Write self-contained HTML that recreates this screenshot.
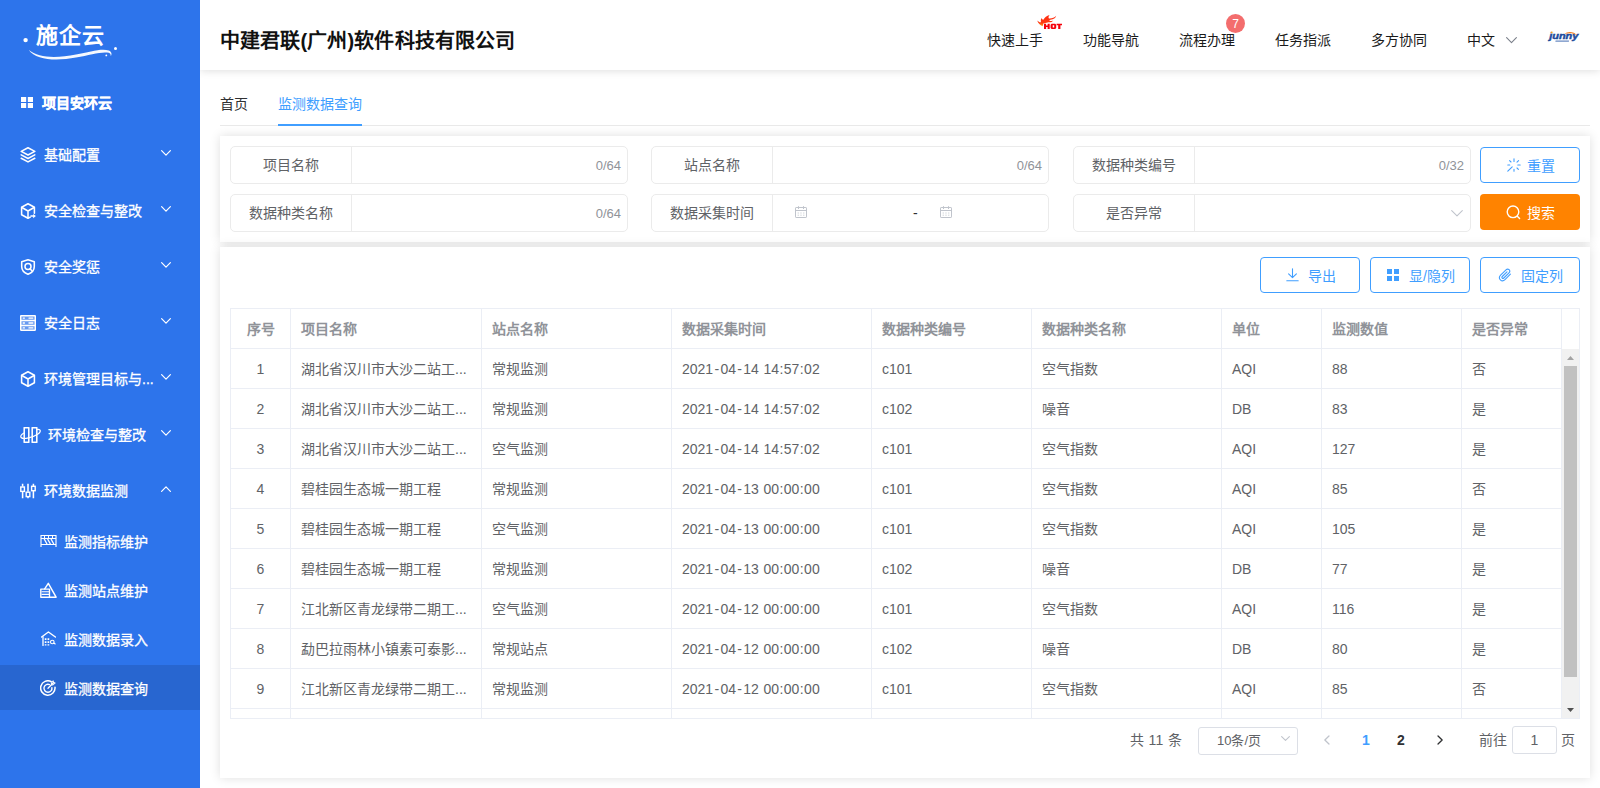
<!DOCTYPE html>
<html lang="zh-CN">
<head>
<meta charset="utf-8">
<title>监测数据查询</title>
<style>
*{box-sizing:border-box;margin:0;padding:0}
html,body{width:1600px;height:788px;overflow:hidden;background:#fff}
body{font-family:"Liberation Sans",sans-serif;font-size:14px;color:#606266;position:relative}
.abs{position:absolute}
svg{display:block}

/* ---------- sidebar ---------- */
#side{position:absolute;left:0;top:0;width:200px;height:788px;background:#2d74eb;color:#fff;z-index:5}
#side .it{position:absolute;left:0;width:200px;height:20px;line-height:20px;font-size:14px;color:#fff;white-space:nowrap}
#side .it .ic{position:absolute;left:20px;top:2px;width:16px;height:16px}
#side .it .tx{position:absolute;left:44px;top:0;-webkit-text-stroke:.3px #fff}
#side .it .ar{position:absolute;left:161px;top:5px;width:10px;height:6px}
#side .sub .ic{left:40px}
#side .sub .tx{left:64px}
#side .act{position:absolute;left:0;top:665px;width:200px;height:45px;background:#2866d0}

/* ---------- header ---------- */
#head{position:absolute;left:200px;top:0;width:1400px;height:70px;background:#fff;box-shadow:0 1px 8px rgba(0,0,0,.13);z-index:3}
#head .title{position:absolute;left:20px;top:26px;height:30px;line-height:30px;font-size:20px;font-weight:bold;color:#111;white-space:nowrap;letter-spacing:.12px}
#head .nav{position:absolute;top:30px;height:20px;line-height:20px;font-size:14px;color:#1a1a1a;white-space:nowrap}

/* ---------- tabs ---------- */
#tabs{position:absolute;left:220px;top:85px;width:1370px;height:41px}
#tabs .line{position:absolute;left:0;top:40px;width:1370px;height:1px;background:#e9e9e9}
#tabs .t{position:absolute;top:9px;height:20px;line-height:20px;font-size:14px;white-space:nowrap}
#tabs .bar{position:absolute;left:58px;top:39px;width:84px;height:2px;background:#409eff}

/* ---------- cards ---------- */
.card{position:absolute;left:220px;width:1370px;background:#fff;box-shadow:0 0 10px rgba(0,0,0,.13)}

/* ---------- filter ---------- */
.fld{position:absolute;width:398px;height:38px;border:1px solid #ebebeb;border-radius:5px;background:#fff}
.fld .lb{position:absolute;left:0;top:0;width:121px;height:36px;line-height:36px;text-align:center;font-size:14px;color:#606266;border-right:1px solid #ebebeb;white-space:nowrap}
.fld .ct{position:absolute;right:6px;top:0;height:36px;line-height:37px;font-size:13px;color:#909399}
.btn{position:absolute;width:100px;height:36px;border-radius:4px;font-size:14px;white-space:nowrap}
.btn.ol{border:1px solid #409eff;color:#409eff;background:#fff}
.btn .bt{position:absolute;top:1px;height:34px;line-height:34px}
/* ---------- table ---------- */
#tbl{position:absolute;left:10px;top:61px;width:1350px;height:411px;border:1px solid #ebeef5;border-right-width:1px;overflow:hidden;background:#fff}
#tbl .r{position:absolute;left:0;width:1331px;height:40px;border-bottom:1px solid #ebeef5}
#tbl .c{position:absolute;top:0;height:39px;line-height:40px;padding-left:10px;font-size:14px;color:#606266;border-right:1px solid #ebeef5;white-space:nowrap;overflow:hidden}
#tbl .h .c{color:#909399;font-weight:bold;line-height:41px}
#tbl i{font-style:normal}
#tbl .hy{margin:0 1.3px}
#tbl .co{margin:0 .45px}
#tbl .c3{word-spacing:.7px}
#tbl .c0{left:0;width:60px;padding-left:0;text-align:center}
#tbl .c1{left:60px;width:191px}
#tbl .c2{left:251px;width:190px}
#tbl .c3{left:441px;width:200px}
#tbl .c4{left:641px;width:160px}
#tbl .c5{left:801px;width:190px}
#tbl .c6{left:991px;width:100px}
#tbl .c7{left:1091px;width:140px}
#tbl .c8{left:1231px;width:100px}
#pg{position:absolute;left:0;top:479px;width:1370px;height:28px;font-size:13px;color:#606266}
#pg .p{position:absolute;top:0;height:28px;line-height:28px;white-space:nowrap}
</style>
</head>
<body>

<!-- ================= SIDEBAR ================= -->
<div id="side">
  <div class="act"></div>
  <svg class="abs" style="left:20px;top:18px" width="104" height="46" viewBox="0 0 104 46">
    <circle cx="5.6" cy="22.1" r="2.2" fill="#fff"/><circle cx="95.5" cy="30.5" r="1.5" fill="#fff"/><circle cx="86.3" cy="37.4" r="0.9" fill="#fff"/>
    <path d="M8.6 31.8 C19 40.8 38 40 56 36.6 C70 33.8 82 30 88.8 32.6 C92 34 92 36.6 90.8 38.2 C91 35.8 89.8 34.8 87 34.5 C80 33.8 69 37.2 56 39.6 C37 43.2 16 42.6 8.6 31.8Z" fill="#fff" opacity=".95"/>
  </svg>
  <div class="abs" style="left:36px;top:21px;height:30px;line-height:30px;font-size:22px;font-weight:bold;color:#fff;letter-spacing:1.2px;white-space:nowrap">施企云</div>
  <div class="it" style="top:93px"><svg class="ic" style="left:21px;top:4px;width:12px;height:11px" viewBox="0 0 12 11"><rect x="0" y="0" width="5.2" height="5" fill="#fff"/><rect x="6.8" y="0" width="5.2" height="5" fill="#fff"/><rect x="0" y="6" width="5.2" height="5" fill="#fff"/><rect x="6.8" y="6" width="5.2" height="5" fill="#fff"/></svg><span class="tx" style="font-weight:bold;left:42px;">项目安环云</span></div>
  <div class="it" style="top:145px"><svg class="ic" viewBox="0 0 16 16" fill="none" stroke="#fff" stroke-width="1.55" stroke-linejoin="round" stroke-linecap="round"><path d="M8 0.8 L14.8 4.4 L8 8 L1.2 4.4Z"/><path d="M1.2 7.9 L8 11.5 L14.8 7.9"/><path d="M1.2 11.3 L8 14.9 L14.8 11.3"/></svg><span class="tx" style="">基础配置</span><svg class="ar" viewBox="0 0 10 6" fill="none" stroke="#fff" stroke-width="1.2" stroke-linecap="round" stroke-linejoin="round"><path d="M0.6 0.7 L5 5.2 L9.4 0.7"/></svg></div>
  <div class="it" style="top:201px"><svg class="ic" viewBox="0 0 16 16" fill="none" stroke="#fff" stroke-width="1.55" stroke-linejoin="round" stroke-linecap="round"><path d="M10.2 14.1 L8 15.3 L1.6 11.7 V4.3 L8 0.7 L14.4 4.3 V10.2"/><path d="M1.9 4.5 L8 8 L14.1 4.5 M8 8 V15"/><path d="M11 13.1 H13.4" stroke-width="1.5"/><path d="M13.2 11 L15.9 13.1 L13.2 15.2Z" fill="#fff" stroke="none"/></svg><span class="tx" style="">安全检查与整改</span><svg class="ar" viewBox="0 0 10 6" fill="none" stroke="#fff" stroke-width="1.2" stroke-linecap="round" stroke-linejoin="round"><path d="M0.6 0.7 L5 5.2 L9.4 0.7"/></svg></div>
  <div class="it" style="top:257px"><svg class="ic" viewBox="0 0 16 16" fill="none" stroke="#fff" stroke-width="1.55" stroke-linejoin="round" stroke-linecap="round"><path d="M8 0.8 L14.3 2.8 V7.6 C14.3 11.4 11.8 13.9 8 15.3 C4.2 13.9 1.7 11.4 1.7 7.6 V2.8 Z"/><circle cx="8" cy="7.5" r="3"/><path d="M10 9.7 L11.9 11.7"/></svg><span class="tx" style="">安全奖惩</span><svg class="ar" viewBox="0 0 10 6" fill="none" stroke="#fff" stroke-width="1.2" stroke-linecap="round" stroke-linejoin="round"><path d="M0.6 0.7 L5 5.2 L9.4 0.7"/></svg></div>
  <div class="it" style="top:313px"><svg class="ic" viewBox="0 0 16 16" fill="none" stroke="#fff" stroke-width="1.55" stroke-linejoin="round" stroke-linecap="round"><rect x="0.7" y="0.7" width="14.6" height="14.6" rx="0.8" fill="rgba(255,255,255,.28)"/><path d="M0.7 5.5 H15.3 M0.7 10.5 H15.3"/><path d="M3.2 3.1 H4.4 M3.2 8 H4.4 M3.2 12.9 H4.4 M9 3.1 H12.8 M9 8 H12.8 M9 12.9 H12.8" stroke-width="1.4"/></svg><span class="tx" style="">安全日志</span><svg class="ar" viewBox="0 0 10 6" fill="none" stroke="#fff" stroke-width="1.2" stroke-linecap="round" stroke-linejoin="round"><path d="M0.6 0.7 L5 5.2 L9.4 0.7"/></svg></div>
  <div class="it" style="top:369px"><svg class="ic" viewBox="0 0 16 16" fill="none" stroke="#fff" stroke-width="1.55" stroke-linejoin="round" stroke-linecap="round"><path d="M8 0.7 L14.4 4.3 V11.7 L8 15.3 L1.6 11.7 V4.3 Z"/><path d="M1.9 4.5 L8 8 L14.1 4.5 M8 8 V15"/></svg><span class="tx" style="">环境管理目标与...</span><svg class="ar" viewBox="0 0 10 6" fill="none" stroke="#fff" stroke-width="1.2" stroke-linecap="round" stroke-linejoin="round"><path d="M0.6 0.7 L5 5.2 L9.4 0.7"/></svg></div>
  <div class="it" style="top:425px"><svg class="ic" style="width:21px" viewBox="0 0 21 16" fill="none" stroke="#fff" stroke-width="1.55" stroke-linejoin="round" stroke-linecap="round"><rect x="4.2" y="0.7" width="4.6" height="14.6"/><rect x="12.2" y="0.7" width="4.6" height="14.6"/><path d="M3.5 6.2 C-1.5 9.5 0.5 12.8 8.5 10.9 C16 9.1 21.5 5.4 20 3.2 C19.3 2.3 17.9 2.3 16.9 2.6" stroke-width="1.2"/></svg><span class="tx" style="left:48px;">环境检查与整改</span><svg class="ar" viewBox="0 0 10 6" fill="none" stroke="#fff" stroke-width="1.2" stroke-linecap="round" stroke-linejoin="round"><path d="M0.6 0.7 L5 5.2 L9.4 0.7"/></svg></div>
  <div class="it" style="top:481px"><svg class="ic" viewBox="0 0 16 16" fill="none" stroke="#fff" stroke-width="1.55" stroke-linejoin="round" stroke-linecap="round"><path d="M2.6 0.7 V3.6 M2.6 8.8 V15.3 M8 0.7 V8.8 M8 14 V15.3 M13.4 0.7 V2.9 M13.4 8.1 V15.3" stroke-linecap="butt"/><g stroke-linejoin="miter" stroke-width="1.4"><rect x="0.8" y="4" width="3.6" height="4.4"/><rect x="6.2" y="9.2" width="3.6" height="4.4"/><rect x="11.6" y="3.3" width="3.6" height="4.4"/></g></svg><span class="tx" style="">环境数据监测</span><svg class="ar" viewBox="0 0 10 6" fill="none" stroke="#fff" stroke-width="1.2" stroke-linecap="round" stroke-linejoin="round"><path d="M0.6 5.3 L5 0.8 L9.4 5.3"/></svg></div>
  <div class="it sub" style="top:532px"><svg class="ic" style="width:17px;height:12px;top:3px" viewBox="0 0 17 12" fill="none" stroke="#fff" stroke-linejoin="miter" stroke-linecap="butt"><path d="M1 12 V0.5 H16 V12 M1 3.5 H16 M1 9.5 H16" stroke-width="1.15"/><path d="M4.2 4 L7 9 M7.6 4 L10.4 9 M11 4 L13.8 9" stroke-width="1.35"/><path d="M4.5 0.8 V3.4 M8.5 0.8 V3.4 M12.5 0.8 V3.4" stroke-width="1"/></svg><span class="tx" style="">监测指标维护</span></div>
  <div class="it sub" style="top:581px"><svg class="ic" style="width:17px;height:16px;top:1px" viewBox="0 0 17 16" fill="none" stroke="#fff" stroke-linejoin="round" stroke-linecap="round"><path d="M4.7 6.9 L8.3 1.3 L16.1 15.2 H9.5" stroke-width="1.45"/><rect x="0.8" y="7.1" width="8.7" height="8.1" stroke-width="1.35"/><path d="M1.5 9.75 H9 M1.5 12.4 H9" stroke-width="1.15" stroke-linecap="butt"/></svg><span class="tx" style="">监测站点维护</span></div>
  <div class="it sub" style="top:630px"><svg class="ic" style="left:41px;width:15px;height:15px;top:1px" viewBox="0 0 15 15" fill="none" stroke="#fff" stroke-width="1.55" stroke-linejoin="round" stroke-linecap="round"><path d="M0.6 6 L7.4 1 L14.4 6" stroke-width="1.4"/><path d="M2 5.8 V14.4" stroke-width="1.3"/><path d="M4.6 7.3 V14.5 M7.4 7.3 V14.5" stroke-width="1.7" stroke-dasharray="1.7 1.25" stroke-linecap="butt"/><circle cx="11.3" cy="11" r="1.8" stroke-width="1.1"/><path d="M12.8 12 L14.2 13" stroke-width="1.1"/></svg><span class="tx" style="">监测数据录入</span></div>
  <div class="it sub" style="top:679px"><svg class="ic" style="top:1px" viewBox="0 0 16 16" fill="none" stroke="#fff" stroke-width="1.55" stroke-linejoin="round" stroke-linecap="round"><path d="M11.2 1.6 A7.2 7.2 0 1 0 15 7.2" stroke-width="1.5"/><path d="M9.5 4.6 A4 4 0 1 0 11.9 7.6" stroke-width="1.4"/><path d="M8 8.2 L13.4 2.8" stroke-width="1.3"/><path d="M11.5 4.5 L11.3 2.5 L13.1 0.7 L13.5 2.5 L15.3 2.9 L13.5 4.7 Z" fill="rgba(255,255,255,.35)" stroke-width="1"/></svg><span class="tx" style="">监测数据查询</span></div>
</div>

<!-- ================= HEADER ================= -->
<div id="head">
  <div class="title">中建君联(广州)软件科技有限公司</div>
  <div class="nav" style="left:787px">快速上手</div>
  <div class="nav" style="left:883px">功能导航</div>
  <div class="nav" style="left:979px">流程办理</div>
  <div class="nav" style="left:1075px">任务指派</div>
  <div class="nav" style="left:1171px">多方协同</div>
  <div class="nav" style="left:1267px">中文</div>
  <svg class="abs" style="left:836px;top:14px" width="28" height="16" viewBox="0 0 28 16">
    <defs><linearGradient id="fl" x1="0" y1="0" x2="0" y2="1"><stop offset="0" stop-color="#ff2a12"/><stop offset=".7" stop-color="#ff3b12"/><stop offset="1" stop-color="#ffa51a"/></linearGradient></defs>
    <path d="M1.2 6.6 C3 8.2 4 8.6 5 8.2 C4.6 6.6 4.8 5.2 5.4 4 C6 5.2 6.6 5.8 7.6 5.6 C8.8 3.4 10.6 1.8 13.6 1 C12.4 2.4 12.2 3.6 13 4.4 C15.6 4.6 18.4 3.8 20.2 1.8 C19.8 4 17.6 5.6 14.4 5.8 C13.4 6 13.2 6.6 13.8 7 C15 7.2 16.2 7 17.2 6.4 C16.4 7.8 14.6 8.4 12.6 8.2 L7.4 9.6 L6.6 12.2 C4 11.4 2.2 9.4 1.2 6.6Z" fill="url(#fl)"/>
    <g fill="#f5000a"><path d="M8 9.8h2.1v1.7h1.5V9.8h2.1v5.1h-2.1v-1.9h-1.5v1.9H8z"/><path d="M15.6 9.8h3.6l1 .9v3.3l-1 .9h-3.6l-1-.9v-3.3zM16.7 11.2v2.3h1.5v-2.3z" fill-rule="evenodd"/><path d="M20.6 9.8h5.4v1.5h-1.6v3.6h-2.2v-3.6h-1.6z"/></g>
  </svg>
  <div class="abs" style="left:1026px;top:14px;width:19px;height:18.5px;border-radius:9.5px;background:#f36d6d;color:#fff;font-size:12px;line-height:20px;text-align:center">7</div>
  <svg class="abs" style="left:1306px;top:37px" width="11" height="7" viewBox="0 0 11 7" fill="none" stroke="#7a7f8a" stroke-width="1.1" stroke-linecap="round" stroke-linejoin="round"><path d="M0.6 0.7 L5.5 5.6 L10.4 0.7"/></svg>
  <svg class="abs" style="left:1347px;top:30px" width="34" height="14" viewBox="0 0 34 14">
    <text x="2.2" y="9.1" font-family="Liberation Sans, sans-serif" font-size="9.4" font-weight="bold" font-style="italic" fill="#1d4b9b" stroke="#1d4b9b" stroke-width=".45" textLength="29.2" lengthAdjust="spacingAndGlyphs">junny</text>
    <rect x="3.7" y="1.2" width="2.6" height="2" fill="#fff"/>
    <circle cx="4.7" cy="2.4" r="0.95" fill="#f3a21d"/>
    <path d="M17.2 3.9 C20.5 1.2 26.5 0.8 30.4 5.6 C26.6 3 21.6 3 17.2 3.9Z" fill="#f07c1e"/>
    <rect x="10.8" y="10.4" width="13.5" height="1.3" fill="#2b5aa8" opacity=".7" transform="skewX(-12)"/>
  </svg>
</div>

<!-- ================= TABS ================= -->
<div id="tabs">
  <div class="line"></div>
  <div class="t" style="left:0;color:#303133">首页</div>
  <div class="t" style="left:58px;color:#409eff">监测数据查询</div>
  <div class="bar"></div>
</div>

<!-- ================= FILTER CARD ================= -->
<div class="card" id="filter" style="top:136px;height:106px">
  <div class="fld" style="left:10px;top:10px"><div class="lb">项目名称</div><div class="ct">0/64</div></div>
  <div class="fld" style="left:431px;top:10px"><div class="lb">站点名称</div><div class="ct">0/64</div></div>
  <div class="fld" style="left:853px;top:10px"><div class="lb">数据种类编号</div><div class="ct">0/32</div></div>
  <div class="fld" style="left:10px;top:58px"><div class="lb">数据种类名称</div><div class="ct">0/64</div></div>
  <div class="fld" style="left:431px;top:58px"><div class="lb">数据采集时间</div><svg class="abs" style="left:143px;top:11px" width="12" height="12" viewBox="0 0 12 12" fill="none" stroke="#c0c4cc" stroke-width="1"><rect x="0.5" y="1.5" width="11" height="10" rx="0.6"/><path d="M0.5 4.5H11.5M3.5 0.2V3M8.5 0.2V3"/><path d="M2.6 7H9.6M2.6 9.2H9.6" stroke-dasharray="1.4 1.3" stroke-width="0.9" opacity=".8"/></svg><div class="abs" style="left:261px;top:0;height:36px;line-height:36px;color:#303133;font-size:14px">-</div><svg class="abs" style="left:288px;top:11px" width="12" height="12" viewBox="0 0 12 12" fill="none" stroke="#c0c4cc" stroke-width="1"><rect x="0.5" y="1.5" width="11" height="10" rx="0.6"/><path d="M0.5 4.5H11.5M3.5 0.2V3M8.5 0.2V3"/><path d="M2.6 7H9.6M2.6 9.2H9.6" stroke-dasharray="1.4 1.3" stroke-width="0.9" opacity=".8"/></svg></div>
  <div class="fld" style="left:853px;top:58px"><div class="lb">是否异常</div><svg class="abs" style="left:377px;top:15px" width="12" height="7" viewBox="0 0 12 7" fill="none" stroke="#c0c4cc" stroke-width="1.1" stroke-linecap="round" stroke-linejoin="round"><path d="M0.7 0.7 L6 5.9 L11.3 0.7"/></svg></div>
  <div class="btn ol" style="left:1260px;top:11px"><svg class="abs" style="left:26px;top:10px" width="14" height="14" viewBox="0 0 14 14" fill="none" stroke="#409eff" stroke-width="1.1" stroke-linecap="round"><path d="M7 0.8V3.4M11.6 2.6L10 4.2M13.2 7H10.8M11.4 11.4L10 10M7 13.2V11.4M0.8 13.2L5.2 8.8M0.8 7H2.8M2.6 2.6L4 4"/></svg><span class="bt" style="left:46px">重置</span></div>
  <div class="btn" style="left:1260px;top:58px;background:#ff8300;color:#fff"><svg class="abs" style="left:26px;top:11px" width="15" height="15" viewBox="0 0 15 15" fill="none" stroke="#fff" stroke-width="1.4" stroke-linecap="round"><circle cx="7" cy="6.8" r="5.8"/><path d="M11.3 11.2L13.6 13.6"/></svg><span class="bt" style="left:47px;top:2px">搜索</span></div>
</div>

<!-- ================= TABLE CARD ================= -->
<div class="card" id="tcard" style="top:247px;height:531px">
  <div class="btn ol" style="left:1040px;top:10px"><svg class="abs" style="left:24.5px;top:10px" width="13" height="14" viewBox="0 0 13 14" fill="none" stroke="#409eff" stroke-width="1.1" stroke-linecap="round" stroke-linejoin="round"><path d="M6.5 0.8V9.6M2.6 5.8L6.5 9.7L10.4 5.8M0.8 12.8H12.2"/></svg><span class="bt" style="left:47px">导出</span></div>
  <div class="btn ol" style="left:1150px;top:10px"><svg class="abs" style="left:16px;top:11px" width="12" height="12" viewBox="0 0 12 12" fill="#409eff"><rect x="0" y="0" width="5" height="5"/><rect x="7" y="0" width="5" height="5"/><rect x="0" y="7" width="5" height="5"/><rect x="7" y="7" width="5" height="5"/></svg><span class="bt" style="left:38px">显/隐列</span></div>
  <div class="btn ol" style="left:1260px;top:10px"><svg class="abs" style="left:17px;top:10px" width="14" height="14" viewBox="0 0 14 14" fill="none" stroke="#409eff" stroke-width="1.1" stroke-linecap="round" stroke-linejoin="round"><path d="M12.4 6.2L7 11.6C5.6 13 3.6 13 2.4 11.8C1.2 10.6 1.2 8.6 2.6 7.2L8 1.8C8.9 0.9 10.3 0.9 11.1 1.7C11.9 2.5 11.9 3.9 11 4.8L5.8 10C5.3 10.5 4.6 10.5 4.2 10.1C3.8 9.7 3.8 9 4.3 8.5L9 3.8"/></svg><span class="bt" style="left:40px">固定列</span></div>
  <div id="tbl">
    <div class="r h" style="top:0px"><div class="c c0">序号</div><div class="c c1">项目名称</div><div class="c c2">站点名称</div><div class="c c3">数据采集时间</div><div class="c c4">数据种类编号</div><div class="c c5">数据种类名称</div><div class="c c6">单位</div><div class="c c7">监测数值</div><div class="c c8">是否异常</div></div>
    <div class="r" style="top:40px"><div class="c c0">1</div><div class="c c1">湖北省汉川市大沙二站工...</div><div class="c c2">常规监测</div><div class="c c3">2021<i class="hy">-</i>04<i class="hy">-</i>14 14<i class="co">:</i>57<i class="co">:</i>02</div><div class="c c4">c101</div><div class="c c5">空气指数</div><div class="c c6">AQI</div><div class="c c7">88</div><div class="c c8">否</div></div>
    <div class="r" style="top:80px"><div class="c c0">2</div><div class="c c1">湖北省汉川市大沙二站工...</div><div class="c c2">常规监测</div><div class="c c3">2021<i class="hy">-</i>04<i class="hy">-</i>14 14<i class="co">:</i>57<i class="co">:</i>02</div><div class="c c4">c102</div><div class="c c5">噪音</div><div class="c c6">DB</div><div class="c c7">83</div><div class="c c8">是</div></div>
    <div class="r" style="top:120px"><div class="c c0">3</div><div class="c c1">湖北省汉川市大沙二站工...</div><div class="c c2">空气监测</div><div class="c c3">2021<i class="hy">-</i>04<i class="hy">-</i>14 14<i class="co">:</i>57<i class="co">:</i>02</div><div class="c c4">c101</div><div class="c c5">空气指数</div><div class="c c6">AQI</div><div class="c c7">127</div><div class="c c8">是</div></div>
    <div class="r" style="top:160px"><div class="c c0">4</div><div class="c c1">碧桂园生态城一期工程</div><div class="c c2">常规监测</div><div class="c c3">2021<i class="hy">-</i>04<i class="hy">-</i>13 00<i class="co">:</i>00<i class="co">:</i>00</div><div class="c c4">c101</div><div class="c c5">空气指数</div><div class="c c6">AQI</div><div class="c c7">85</div><div class="c c8">否</div></div>
    <div class="r" style="top:200px"><div class="c c0">5</div><div class="c c1">碧桂园生态城一期工程</div><div class="c c2">空气监测</div><div class="c c3">2021<i class="hy">-</i>04<i class="hy">-</i>13 00<i class="co">:</i>00<i class="co">:</i>00</div><div class="c c4">c101</div><div class="c c5">空气指数</div><div class="c c6">AQI</div><div class="c c7">105</div><div class="c c8">是</div></div>
    <div class="r" style="top:240px"><div class="c c0">6</div><div class="c c1">碧桂园生态城一期工程</div><div class="c c2">常规监测</div><div class="c c3">2021<i class="hy">-</i>04<i class="hy">-</i>13 00<i class="co">:</i>00<i class="co">:</i>00</div><div class="c c4">c102</div><div class="c c5">噪音</div><div class="c c6">DB</div><div class="c c7">77</div><div class="c c8">是</div></div>
    <div class="r" style="top:280px"><div class="c c0">7</div><div class="c c1">江北新区青龙绿带二期工...</div><div class="c c2">空气监测</div><div class="c c3">2021<i class="hy">-</i>04<i class="hy">-</i>12 00<i class="co">:</i>00<i class="co">:</i>00</div><div class="c c4">c101</div><div class="c c5">空气指数</div><div class="c c6">AQI</div><div class="c c7">116</div><div class="c c8">是</div></div>
    <div class="r" style="top:320px"><div class="c c0">8</div><div class="c c1">勐巴拉雨林小镇素可泰影...</div><div class="c c2">常规站点</div><div class="c c3">2021<i class="hy">-</i>04<i class="hy">-</i>12 00<i class="co">:</i>00<i class="co">:</i>00</div><div class="c c4">c102</div><div class="c c5">噪音</div><div class="c c6">DB</div><div class="c c7">80</div><div class="c c8">是</div></div>
    <div class="r" style="top:360px"><div class="c c0">9</div><div class="c c1">江北新区青龙绿带二期工...</div><div class="c c2">常规监测</div><div class="c c3">2021<i class="hy">-</i>04<i class="hy">-</i>12 00<i class="co">:</i>00<i class="co">:</i>00</div><div class="c c4">c101</div><div class="c c5">空气指数</div><div class="c c6">AQI</div><div class="c c7">85</div><div class="c c8">否</div></div>
    <div class="r" style="top:400px"><div class="c c0"></div><div class="c c1"></div><div class="c c2"></div><div class="c c3"></div><div class="c c4"></div><div class="c c5"></div><div class="c c6"></div><div class="c c7"></div><div class="c c8"></div></div>
    <div class="abs" style="left:1331px;top:0;width:17px;height:40px;background:#fff"></div>
    <div class="abs" style="left:1331px;top:40px;width:17px;height:370px;background:#f1f1f1"></div>
    <div class="abs" style="left:1333px;top:57px;width:13px;height:311px;background:#c1c1c1"></div>
    <svg class="abs" style="left:1336px;top:47px" width="7" height="4" viewBox="0 0 7 4"><path d="M0 4L3.5 0L7 4Z" fill="#a3a3a3"/></svg>
    <svg class="abs" style="left:1336px;top:399px" width="7" height="4" viewBox="0 0 7 4"><path d="M0 0L3.5 4L7 0Z" fill="#505050"/></svg>
  </div>
  <div id="pg">
    <div class="p" style="left:910px;font-size:14px;letter-spacing:.3px">共 11 条</div>
    <div class="abs" style="left:978px;top:1px;width:100px;height:28px;border:1px solid #dcdfe6;border-radius:3px"></div>
    <div class="p" style="left:997px;top:1px">10条/页</div>
    <svg class="abs" style="left:1061px;top:10px" width="9" height="5.4" viewBox="0 0 10 6" fill="none" stroke="#c0c4cc" stroke-width="1.2" stroke-linecap="round" stroke-linejoin="round"><path d="M0.7 0.7L5 5L9.3 0.7"/></svg>
    <svg class="abs" style="left:1104px;top:9px" width="6" height="10" viewBox="0 0 7 11" fill="none" stroke="#c0c4cc" stroke-width="1.5" stroke-linecap="round" stroke-linejoin="round"><path d="M5.8 0.8L1 5.5L5.8 10.2"/></svg>
    <div class="p" style="left:1131px;width:30px;text-align:center;font-weight:bold;color:#409eff;font-size:14px">1</div>
    <div class="p" style="left:1166px;width:30px;text-align:center;font-weight:bold;color:#303133;font-size:14px">2</div>
    <svg class="abs" style="left:1217px;top:9px" width="6" height="10" viewBox="0 0 7 11" fill="none" stroke="#303133" stroke-width="1.5" stroke-linecap="round" stroke-linejoin="round"><path d="M1.2 0.8L6 5.5L1.2 10.2"/></svg>
    <div class="p" style="left:1259px;font-size:14px">前往</div>
    <div class="abs" style="left:1292px;top:0;width:45px;height:28px;border:1px solid #dcdfe6;border-radius:3px;text-align:center;line-height:27px;font-size:14px;color:#606266">1</div>
    <div class="p" style="left:1341px;font-size:14px">页</div>
  </div>
</div>

</body>
</html>
